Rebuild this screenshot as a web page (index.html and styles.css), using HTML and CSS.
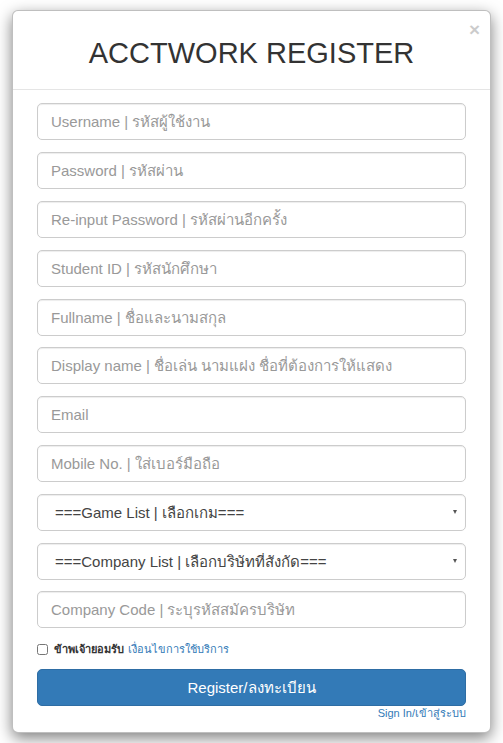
FILE: index.html
```html
<!DOCTYPE html>
<html lang="th">
<head>
  <meta charset="UTF-8" />
  <title>ACCTWORK REGISTER</title>
  <link rel="stylesheet" href="styles.css">
</head>
<body>
  <div class="modal">
    <div class="modal-header">
      <button class="close" type="button">&times;</button>
      <h4 class="modal-title">ACCTWORK REGISTER</h4>
    </div>
    <form class="modal-body">
      <input class="form-control" type="text" placeholder="Username | รหัสผู้ใช้งาน">
      <input class="form-control" type="password" placeholder="Password | รหัสผ่าน">
      <input class="form-control" type="password" placeholder="Re-input Password | รหัสผ่านอีกครั้ง">
      <input class="form-control" type="text" placeholder="Student ID | รหัสนักศึกษา">
      <input class="form-control" type="text" placeholder="Fullname | ชื่อและนามสกุล">
      <input class="form-control" type="text" placeholder="Display name | ชื่อเล่น นามแฝง ชื่อที่ต้องการให้แสดง">
      <input class="form-control" type="text" placeholder="Email">
      <input class="form-control" type="text" placeholder="Mobile No. | ใส่เบอร์มือถือ">
      <div class="select-wrap">
        <select class="form-control">
          <option>===Game List | เลือกเกม===</option>
        </select>
      </div>
      <div class="select-wrap">
        <select class="form-control">
          <option>===Company List | เลือกบริษัทที่สังกัด===</option>
        </select>
      </div>
      <input class="form-control" type="text" placeholder="Company Code | ระบุรหัสสมัครบริษัท">

      <label class="checkbox">
        <input type="checkbox">
        <span class="agree">ข้าพเจ้ายอมรับ</span>
        <a href="#">เงื่อนไขการใช้บริการ</a>
      </label>

      <button class="btn-primary" type="button">Register/ลงทะเบียน</button>
      <div class="signin"><a href="#">Sign In/เข้าสู่ระบบ</a></div>
    </form>
  </div>
</body>
</html>
```

FILE: styles.css
```css
* {
  box-sizing: border-box;
}

body {
  margin: 0;
  background: #fff;
  font-family: "Liberation Sans", Arial, sans-serif;
  color: #333;
}

.modal {
  width: 479px;
  margin: 10px 12px;
  height: 723px;
  background: #fff;
  border: 1px solid rgba(0, 0, 0, 0.25);
  border-radius: 6px;
  box-shadow: 0 5px 15px rgba(0, 0, 0, 0.5);
}

.modal-header {
  position: relative;
  padding: 22px 15px 15px;
  border-bottom: 1px solid #e5e5e5;
}

.modal-title {
  margin: 0;
  text-align: center;
  font-size: 29px;
  font-weight: normal;
  line-height: 1.42857;
  color: #333;
}

.close {
  position: absolute;
  top: 8px;
  right: 10px;
  padding: 0;
  border: none;
  background: none;
  font-family: "Liberation Sans", Arial, sans-serif;
  font-size: 19px;
  font-weight: bold;
  color: #000;
  opacity: 0.2;
  cursor: pointer;
}

.modal-body {
  display: flex;
  flex-direction: column;
  padding: 13px 24px 0;
  margin: 0;
}

.form-control {
  display: block;
  width: 100%;
  height: 37px;
  margin: 0 0 11.8px;
  padding: 6px 13px;
  font-family: "Liberation Sans", Arial, sans-serif;
  font-size: 15px;
  color: #555;
  background: #fff;
  border: 1px solid #ccc;
  border-radius: 5px;
  box-shadow: inset 0 1px 1px rgba(0, 0, 0, 0.075);
}

.form-control::placeholder {
  color: #999;
}

.select-wrap {
  position: relative;
}

.select-wrap select {
  appearance: none;
  -webkit-appearance: none;
  padding-left: 17px;
  color: #444;
}

.select-wrap::after {
  content: "";
  position: absolute;
  right: 9px;
  top: 16px;
  border-left: 2.5px solid transparent;
  border-right: 2.5px solid transparent;
  border-top: 4px solid #555;
  pointer-events: none;
}

.checkbox {
  display: flex;
  align-items: center;
  gap: 4px;
  height: 18px;
  margin: 0 0 11px;
  font-size: 11px;
}

.checkbox input {
  margin: 0 2px 0 0;
  width: 11px;
  height: 11px;
}

.agree {
  font-weight: bold;
  color: #333;
}

a {
  color: #337ab7;
  text-decoration: none;
}

.btn-primary {
  width: 100%;
  height: 37px;
  border: 1px solid #2e6da4;
  border-radius: 5px;
  background: #337ab7;
  color: #fff;
  font-family: "Liberation Sans", Arial, sans-serif;
  font-size: 15px;
  cursor: pointer;
}

.signin {
  text-align: right;
  font-size: 11px;
  line-height: 14px;
}
```
